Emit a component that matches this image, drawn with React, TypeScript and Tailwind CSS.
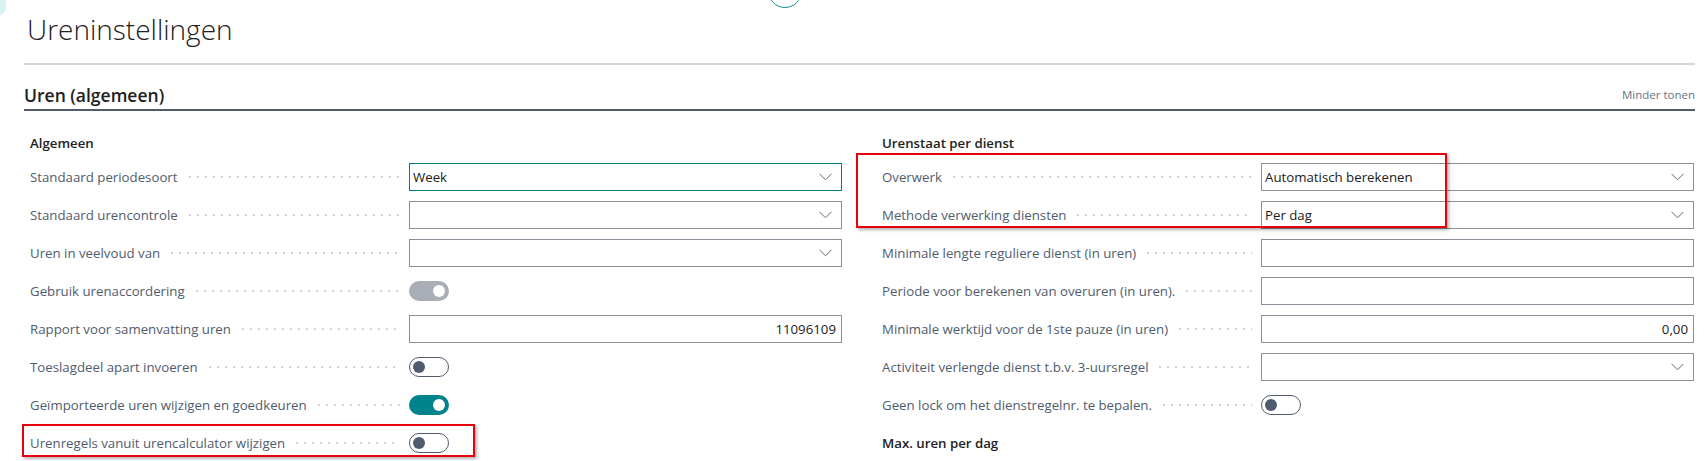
import React from "react";

const FONT = { fontFamily: '"Open Sans", "Noto Sans", Arial, sans-serif' };

function Chevron() {
  return (
    <svg width="13" height="8" viewBox="0 0 13 8" className="shrink-0">
      <polyline points="0.5,0.8 6.5,6.8 12.5,0.8" fill="none" stroke="#5f6b7a" strokeWidth="1" />
    </svg>
  );
}

function Leader() {
  return (
    <span className="ml-[8px] h-[4px] flex-1 bg-[radial-gradient(circle,#d2d2d2_0.9px,transparent_1.4px)] bg-[length:8px_4px] bg-left bg-repeat-x" />
  );
}

function Row({ label, children }: { label: string; children: React.ReactNode }) {
  return (
    <div className="flex h-[28px] items-center">
      <div className="flex w-[379px] shrink-0 items-center pr-[9px]">
        <span className="whitespace-nowrap text-[13.25px] leading-[18px] text-[#505c6d]">{label}</span>
        <Leader />
      </div>
      <div className="flex min-w-0 flex-1 items-center">{children}</div>
    </div>
  );
}

function Select({ value = "", focused = false }: { value?: string; focused?: boolean }) {
  return (
    <div
      className={
        focused
          ? "flex h-[28px] w-full items-center justify-between border border-[#00807f] pl-[3px] pr-[9px]"
          : "flex h-[28px] w-full items-center justify-between border border-[#8a9099] pl-[3px] pr-[9px]"
      }
    >
      <span className="text-[13.25px] leading-[18px] text-[#212121]">{value}</span>
      <Chevron />
    </div>
  );
}

function TextBox({ value = "", right = false }: { value?: string; right?: boolean }) {
  return (
    <div
      className={
        right
          ? "flex h-[28px] w-full items-center justify-end border border-[#8a9099] pr-[5px]"
          : "flex h-[28px] w-full items-center border border-[#8a9099] pl-[3px]"
      }
    >
      <span className="text-[13.25px] leading-[18px] text-[#212121]">{value}</span>
    </div>
  );
}

function Toggle({ state }: { state: "off" | "on" | "disabled" }) {
  if (state === "on") {
    return (
      <div className="flex h-[20px] w-[40px] items-center justify-end rounded-full bg-[#00838a] pr-[4px]">
        <span className="h-[12px] w-[12px] rounded-full bg-white" />
      </div>
    );
  }
  if (state === "disabled") {
    return (
      <div className="flex h-[20px] w-[40px] items-center justify-end rounded-full bg-[#a9aeb6] pr-[4px]">
        <span className="h-[12px] w-[12px] rounded-full bg-white" />
      </div>
    );
  }
  return (
    <div className="flex h-[20px] w-[40px] items-center rounded-full border border-[#505c6d] bg-white pl-[3px]">
      <span className="h-[12px] w-[12px] rounded-full bg-[#505c6d]" />
    </div>
  );
}

function GroupTitle({ children }: { children: React.ReactNode }) {
  return <div className="h-[20px] text-[13.25px] font-semibold leading-[20px] text-[#212121]">{children}</div>;
}

export default function App() {
  return (
    <div className="relative h-[461px] w-[1708px] overflow-hidden bg-white" style={FONT}>
      {/* corner glow and floating toggle button at the top edge */}
      <div className="absolute left-[-12px] top-[-10px] h-[26px] w-[18px] rounded-full bg-[#d9f1f1]" />
      <div className="absolute left-[768px] top-[-26px] h-[34px] w-[34px] rounded-full border-[1.5px] border-[#1a8f93] bg-white" />

      <div className="pl-[24px] pr-[13px]">
        <div className="h-[63px] pl-[3px] pt-[11px]">
          <h1 className="text-[28px] font-light leading-[36px] text-[#212121]">Ureninstellingen</h1>
        </div>
        <div className="h-[2px] bg-[#d5d6d9]" />

        <div className="flex h-[44px] items-start justify-between pt-[20px]">
          <h2 className="text-[17.5px] font-semibold leading-[20px] text-[#212121]">Uren (algemeen)</h2>
          <span className="pt-[1px] text-[11.5px] leading-[18px] text-[#6b7280]">Minder tonen</span>
        </div>
        <div className="h-[2px] bg-[#505c6d]" />

        <div className="grid grid-cols-2 gap-x-[40px] pl-[6px] pr-[1px] pt-[22px]">
          <div className="flex flex-col gap-[10px]">
            <GroupTitle>Algemeen</GroupTitle>
            <Row label="Standaard periodesoort">
              <Select value="Week" focused />
            </Row>
            <Row label="Standaard urencontrole">
              <Select />
            </Row>
            <Row label="Uren in veelvoud van">
              <Select />
            </Row>
            <Row label="Gebruik urenaccordering">
              <Toggle state="disabled" />
            </Row>
            <Row label="Rapport voor samenvatting uren">
              <TextBox value="11096109" right />
            </Row>
            <Row label="Toeslagdeel apart invoeren">
              <Toggle state="off" />
            </Row>
            <Row label="Geïmporteerde uren wijzigen en goedkeuren">
              <Toggle state="on" />
            </Row>
            <Row label="Urenregels vanuit urencalculator wijzigen">
              <Toggle state="off" />
            </Row>
          </div>

          <div className="flex flex-col gap-[10px]">
            <GroupTitle>Urenstaat per dienst</GroupTitle>
            <Row label="Overwerk">
              <Select value="Automatisch berekenen" />
            </Row>
            <Row label="Methode verwerking diensten">
              <Select value="Per dag" />
            </Row>
            <Row label="Minimale lengte reguliere dienst (in uren)">
              <TextBox />
            </Row>
            <Row label="Periode voor berekenen van overuren (in uren).">
              <TextBox />
            </Row>
            <Row label="Minimale werktijd voor de 1ste pauze (in uren)">
              <TextBox value="0,00" right />
            </Row>
            <Row label="Activiteit verlengde dienst t.b.v. 3-uursregel">
              <Select />
            </Row>
            <Row label="Geen lock om het dienstregelnr. te bepalen.">
              <Toggle state="off" />
            </Row>
            <div className="flex h-[28px] items-center">
              <GroupTitle>Max. uren per dag</GroupTitle>
            </div>
          </div>
        </div>
      </div>

      {/* red highlight frames */}
      <div className="absolute left-[856px] top-[153px] h-[75px] w-[591px] border-2 border-[#e8000b] shadow-[2px_2px_3px_rgba(0,0,0,0.3)]" />
      <div className="absolute left-[22px] top-[424px] h-[33px] w-[453px] border-2 border-[#e8000b] shadow-[2px_2px_3px_rgba(0,0,0,0.3)]" />
    </div>
  );
}
